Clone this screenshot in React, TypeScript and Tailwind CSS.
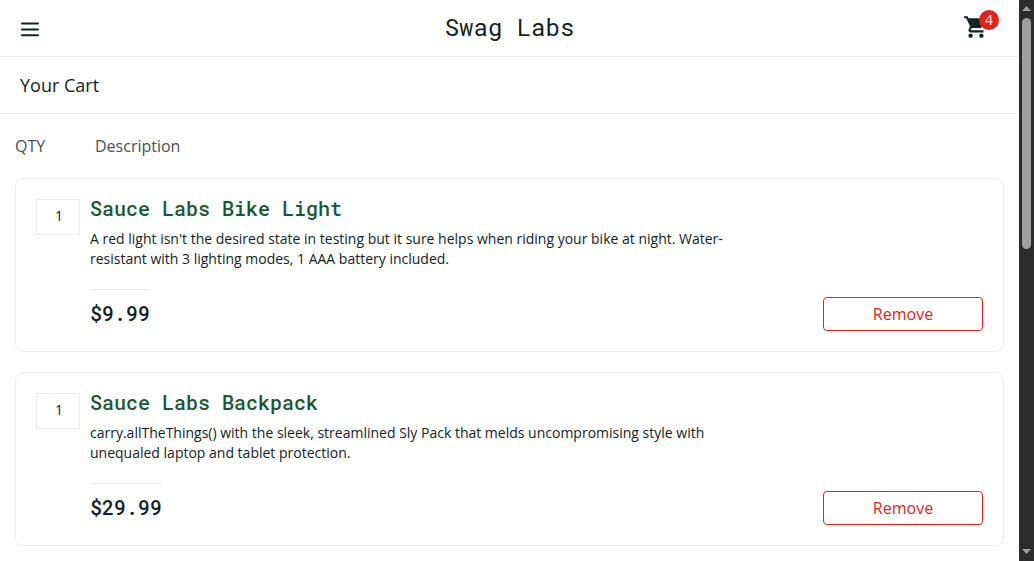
import { MdShoppingCart } from "react-icons/md";

type CartItem = {
  id: string;
  name: string;
  description: string;
  price: string;
  quantity: number;
};

const items: CartItem[] = [
  {
    id: "bike-light",
    name: "Sauce Labs Bike Light",
    description:
      "A red light isn't the desired state in testing but it sure helps when riding your bike at night. Water-resistant with 3 lighting modes, 1 AAA battery included.",
    price: "$9.99",
    quantity: 1,
  },
  {
    id: "backpack",
    name: "Sauce Labs Backpack",
    description:
      "carry.allTheThings() with the sleek, streamlined Sly Pack that melds uncompromising style with unequaled laptop and tablet protection.",
    price: "$29.99",
    quantity: 1,
  },
];

function MenuIcon() {
  return (
    <svg width="20" height="16" viewBox="0 0 20 16" fill="none" stroke="#132322" strokeWidth="2" strokeLinecap="round" aria-hidden="true">
      <path d="M2 2.5H18M2 8.5H18M2 14.2H18" />
    </svg>
  );
}

function Header() {
  return (
    <header className="grid h-[57px] grid-cols-3 items-center border-b border-[#ededed] px-5 pb-0.5">
      <button type="button" aria-label="Open Menu" className="justify-self-start pt-1">
        <MenuIcon />
      </button>
      <div className="justify-self-center whitespace-nowrap font-['Roboto_Mono','Liberation_Mono',monospace] text-2xl">
        Swag Labs
      </div>
      <a href="#cart" aria-label="Cart" className="relative mr-[10px] justify-self-end">
        <MdShoppingCart size={26} />
        <span className="absolute -top-1 left-4 flex size-5 items-center justify-center rounded-full bg-[#e2231a] text-sm leading-5 text-white">
          4
        </span>
      </a>
    </header>
  );
}

function CartRow({ item }: { item: CartItem }) {
  return (
    <li className="flex gap-[10px] rounded-lg border border-[#ededed] p-5">
      <div className="flex h-9 w-11 shrink-0 justify-center border border-[#ededed] pt-1.5 pl-0.5 text-sm leading-5">
        {item.quantity}
      </div>
      <div className="flex min-w-0 flex-1 flex-col">
        <a
          href={`#${item.id}`}
          className="self-start font-['Roboto_Mono','Liberation_Mono',monospace] text-xl leading-[18px] font-medium text-[#18583a]"
        >
          {item.name}
        </a>
        <p className="mt-3 max-w-[640px] text-sm leading-5">{item.description}</p>
        <div className="mt-5 flex items-end justify-between">
          <div className="mb-1.5 border-t border-[#ededed] pt-[11px] font-['Roboto_Mono','Liberation_Mono',monospace] text-xl leading-6 font-medium">
            {item.price}
          </div>
          <button
            type="button"
            className="h-[34px] w-40 rounded border border-[#e2231a] text-base leading-5 text-[#e2231a]"
          >
            Remove
          </button>
        </div>
      </div>
    </li>
  );
}

function ScrollTrack() {
  return (
    <div aria-hidden="true" className="flex w-[15px] shrink-0 flex-col items-center bg-[#2c2c2c]">
      <svg className="h-[18px] w-[15px] shrink-0" viewBox="0 0 15 18" fill="#9f9f9f">
        <path d="M7.5 6L12 11H3Z" />
      </svg>
      <div className="flex w-[9px] flex-1 flex-col">
        <div className="h-[44%] rounded-full bg-[#9f9f9f]" />
      </div>
      <svg className="h-[18px] w-[15px] shrink-0" viewBox="0 0 15 18" fill="#9f9f9f">
        <path d="M7.5 11L12 6H3Z" />
      </svg>
    </div>
  );
}

export default function App() {
  return (
    <div className="flex h-screen overflow-hidden bg-white font-['Open_Sans','Noto_Sans',sans-serif] text-[#132322]">
      <div className="min-w-0 flex-1 overflow-hidden">
        <Header />
        <div className="flex h-[57px] items-center border-b border-[#ededed] px-5">
          <h1 className="text-lg font-medium">Your Cart</h1>
        </div>
        <main className="px-[15px] pt-5">
          <div className="flex text-base leading-6 font-medium text-[#485058]">
            <div className="w-20">QTY</div>
            <div>Description</div>
          </div>
          <ul className="mt-5 flex flex-col gap-5">
            {items.map((item) => (
              <CartRow key={item.id} item={item} />
            ))}
          </ul>
        </main>
      </div>
      <ScrollTrack />
    </div>
  );
}
